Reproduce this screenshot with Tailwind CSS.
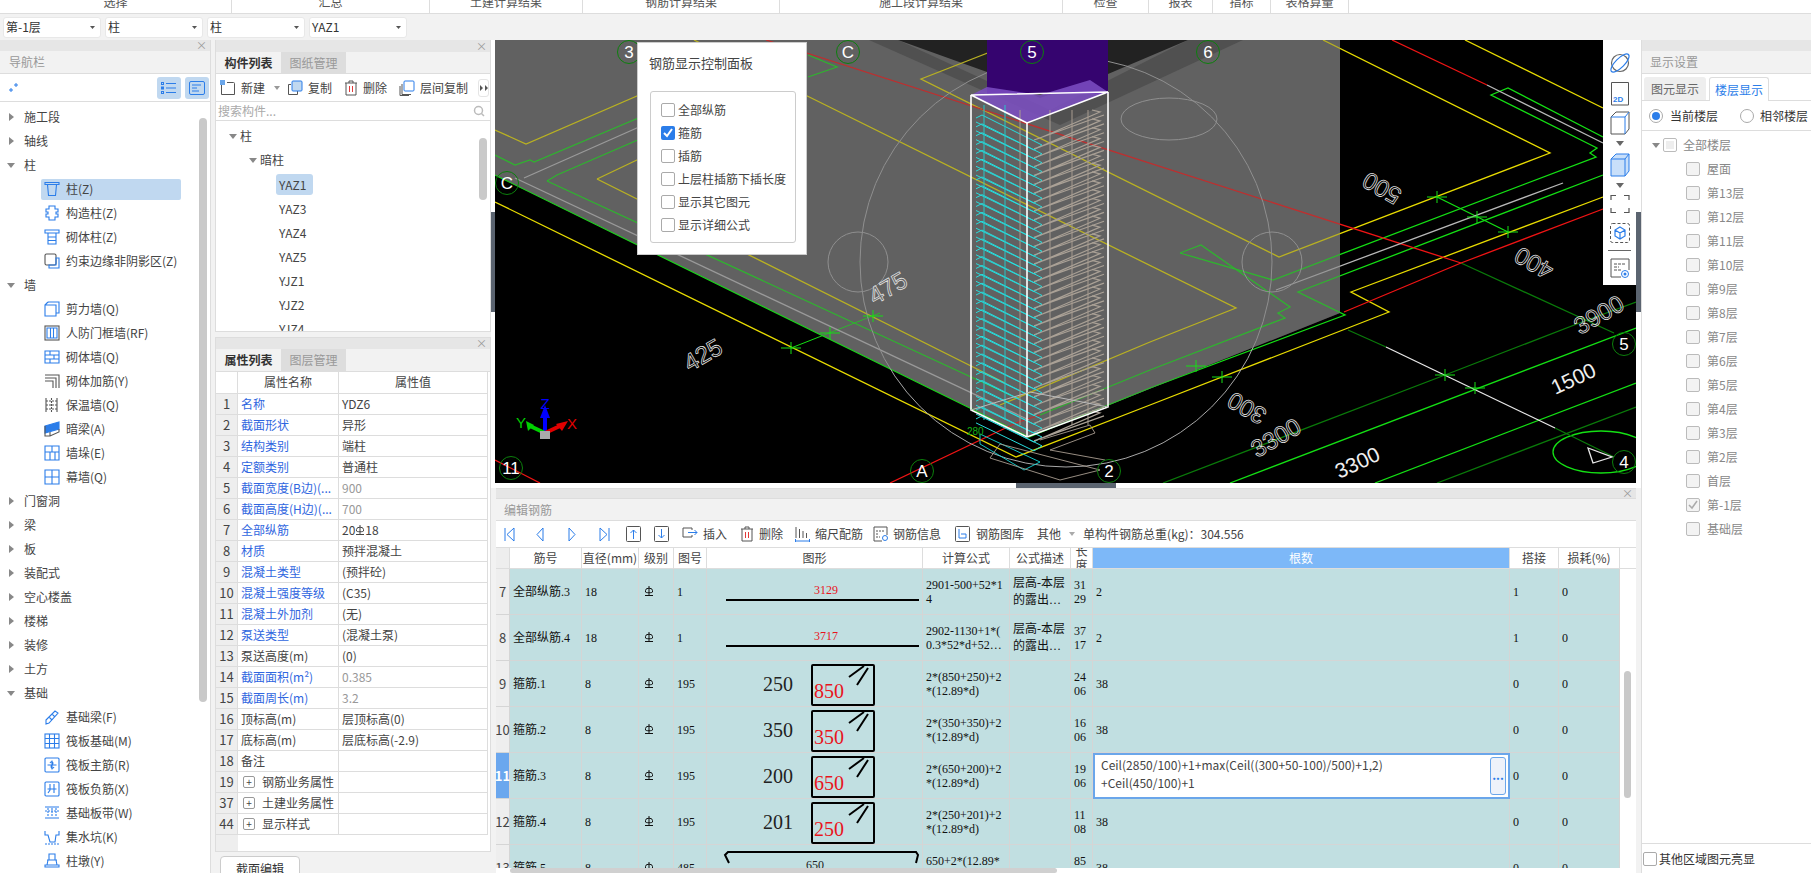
<!DOCTYPE html>
<html lang="zh-CN">
  <head>
    <meta charset="UTF-8" />
    <script src="https://cdn.jsdelivr.net/npm/@tailwindcss/browser@4"></script>
    <title>编辑钢筋</title>
  </head>
  <body class="w-[1811px] h-[873px] overflow-hidden bg-[#f2f2f2] text-[12px] text-[#444] font-['Noto_Sans_CJK_SC','Liberation_Sans',sans-serif]">
    <!-- top tabs, cut off by the window -->
    <div class="flex h-[14px] bg-white border-b border-[#ddd] overflow-hidden leading-none text-[#555]">
      <div class="w-[232px] text-center border-r border-[#ddd] -mt-[4px] h-[20px]">选择</div>
      <div class="w-[198px] text-center border-r border-[#ddd] -mt-[4px] h-[20px]">汇总</div>
      <div class="w-[153px] text-center border-r border-[#ddd] -mt-[4px] h-[20px]">土建计算结果</div>
      <div class="w-[197px] text-center border-r border-[#ddd] -mt-[4px] h-[20px]">钢筋计算结果</div>
      <div class="w-[283px] text-center border-r border-[#ddd] -mt-[4px] h-[20px]">施工段计算结果</div>
      <div class="w-[86px] text-center border-r border-[#ddd] -mt-[4px] h-[20px]">检查</div>
      <div class="w-[64px] text-center border-r border-[#ddd] -mt-[4px] h-[20px]">报表</div>
      <div class="w-[58px] text-center border-r border-[#ddd] -mt-[4px] h-[20px]">指标</div>
      <div class="w-[78px] text-center border-r border-[#ddd] -mt-[4px] h-[20px]">表格算量</div>
    </div>
    <!-- selectors -->
    <div id="selects" class="flex h-[26px] items-center pl-[3px] gap-[4px]"></div>

    <div class="flex h-[833px]">
      <!-- navigation -->
      <div class="w-[211px] shrink-0 bg-white border-r border-[#ddd] flex flex-col overflow-hidden relative">
        <div class="h-[11px] bg-[#e6e6e6] flex items-center justify-end pr-[2px] text-[#999] text-[11px]"><span class="mr-[1px]">×</span></div>
        <div class="h-[23px] bg-[#f2f2f2] border-b border-[#ddd] flex items-center pl-[9px] text-[#999] text-[12px]">导航栏</div>
        <div class="h-[28px] border-b border-[#ddd] flex items-center pl-[8px]">
          <svg width="11" height="11" viewBox="0 0 11 11" fill="none" stroke="#2b7de9"><path d="M3 6v4M1 8h4M8 1v4M6 3h4"/></svg>
          <div class="ml-auto mr-[1px] flex gap-[4px]">
            <div class="w-[24px] h-[22px] bg-[#c0d8f0] rounded-[3px] flex items-center justify-center"><svg width="16" height="14" fill="none" stroke="#2b7de9"><rect x=".5" y="1.5" width="2" height="2"/><rect x=".5" y="6" width="2" height="2"/><rect x=".5" y="10.5" width="2" height="2"/><path d="M5 2.500h10M5 7h10M5 11.500h10"/></svg></div>
            <div class="w-[24px] h-[22px] bg-[#c0d8f0] rounded-[3px] flex items-center justify-center"><svg width="16" height="14" fill="none" stroke="#2b7de9"><rect x=".5" y=".5" width="15" height="13" rx="1.500"/><path d="M3 4h9M3 7h5M3 10h7"/></svg></div>
          </div>
        </div>
        <div id="navTree" class="pt-[3px]"></div>
        <div class="absolute left-[199px] top-[78px] w-[8px] h-[584px] bg-[#c9c9c9] rounded-[4px]"></div>
      </div>

      <!-- component list + properties -->
      <div class="w-[276px] ml-[4px] shrink-0 flex flex-col">
        <div class="h-[292px] shrink-0 bg-white border border-t-0 border-[#ddd] flex flex-col overflow-hidden relative">
          <div class="h-[12px] shrink-0 bg-[#e6e6e6] flex items-center justify-end pr-[3px] text-[#999] text-[11px]">×</div>
          <div class="h-[22px] shrink-0 bg-[#f2f2f2] border-b border-[#ddd] flex">
            <div class="w-[65px] text-center font-bold text-[#333] leading-[22px]">构件列表</div>
            <div class="w-[65px] text-center bg-[#ddd] text-[#999] leading-[22px]">图纸管理</div>
          </div>
          <div class="h-[28px] shrink-0 border-b border-[#ddd] flex items-center pl-[4px] text-[#444] whitespace-nowrap">
            <svg class="shrink-0" width="16" height="16" fill="none" stroke="#555"><path d="M1.500 4v10.500h13v-11a1 1 0 0 0-1-1H7"/><rect x="0" y="0" width="5" height="5" fill="#6aa6ea" stroke="none"/></svg>
            <span class="ml-[5px]">新建</span>
            <svg class="ml-[9px] shrink-0" width="6" height="4"><path d="M0 0h6L3 4z" fill="#999"/></svg>
            <svg class="ml-[7px] shrink-0" width="16" height="16" fill="none" stroke="#555"><path d="M4 4.500H1.500v10h9V11"/><rect x="5" y="1" width="10" height="10" rx="1" fill="#c0d8f0" stroke="#2b7de9"/></svg>
            <span class="ml-[5px]">复制</span>
            <svg class="ml-[12px] shrink-0" width="14" height="16" fill="none" stroke="#555"><path d="M1 3h12M5 3V1h4v2M2 3v12h10V3"/><path d="M5.500 6v6M8.500 6v6" stroke="#e23a3a"/></svg>
            <span class="ml-[5px]">删除</span>
            <svg class="ml-[12px] shrink-0" width="16" height="16" fill="none" stroke="#555"><path d="M3 4v10.500h9M1 6v9.500h9"/><rect x="5" y="1" width="10" height="10" rx="1" stroke="#2b7de9"/></svg>
            <span class="ml-[5px]">层间复制</span>
            <div class="ml-[10px] w-[11px] h-[18px] shrink-0 border border-[#e5e5e5] rounded-[3px] flex items-center justify-center"><svg width="8" height="6"><path d="M0 0l3 3-3 3zM5 0l3 3-3 3z" fill="#555"/></svg></div>
          </div>
          <div class="h-[19px] shrink-0 border-b border-[#ddd] flex items-center pl-[2px] text-[#aaa] justify-between pr-[5px]">
            <span>搜索构件...</span>
            <svg width="12" height="12" fill="none" stroke="#bbb" stroke-width="1.500"><circle cx="5.500" cy="5.500" r="4"/><path d="M8.500 8.500L11 11"/></svg>
          </div>
          <div id="partTree" class="pt-[3px] text-[#444]"></div>
          <div class="absolute left-[263px] top-[98px] w-[8px] h-[62px] bg-[#c9c9c9] rounded-[4px]"></div>
        </div>
        <div class="h-[5px] shrink-0"></div>
        <div class="h-[515px] shrink-0 bg-white border border-t-0 border-[#ddd] flex flex-col">
          <div class="h-[12px] shrink-0 bg-[#e6e6e6] border-t border-[#ddd] flex items-center justify-end pr-[3px] text-[#999] text-[11px]">×</div>
          <div class="h-[23px] shrink-0 bg-[#f2f2f2] border-b border-[#ddd] flex">
            <div class="w-[65px] text-center font-bold text-[#333] leading-[22px]">属性列表</div>
            <div class="w-[65px] text-center bg-[#ddd] text-[#999] leading-[22px]">图层管理</div>
          </div>
          <div id="attrTable" class="flex-1 relative"></div>
        </div>
        <div class="mt-[4px] ml-[5px] w-[80px] h-[30px] shrink-0 border border-[#ccc] rounded-t-[4px] bg-white text-center leading-[24px] text-[#333]">截面编辑</div>
      </div>

      <!-- viewport + rebar table -->
      <div class="w-[1150px] shrink-0 flex flex-col">
        <div class="flex h-[443px] shrink-0">
          <div class="w-[4px] h-full relative bg-white"><div class="absolute top-[172px] left-0 w-[4px] h-[100px] bg-[#5b6470]"></div></div>
          <div class="relative w-[1141px] h-[443px] bg-black overflow-hidden">
            <svg id="cad" class="absolute inset-0" width="1141" height="443" viewBox="495 40 1141 443" fill="none" font-family="Liberation Sans, sans-serif">
              <polygon points="495,40 1340,40 1340,313 1029,437 495,175" fill="#616161"/>
              <polygon points="869,40 898,40 1050,110 1188,40 1243,40 1060,125" fill="#474747"/>
              <polygon points="898,40 1188,40 1108,74 1040,98 987,72" fill="#000"/>
              <g stroke-width="1.300">
                <g stroke="#e8dc00">
                  <polyline points="495,130 526,144 720,60"/>
                  <polyline points="694,40 1236,308 1150,342 1000,405"/>
                  <polyline points="1021,40 921,79 1279,257 1550,153 1323,40" />
                  <polyline points="597,179 700,130"/>
                  <polyline points="597,179 1005,383"/>
                  <polyline points="495,202 1016,457 1150,405 1348,328 1389,312 1351,292 1603,197"/>
                  <polyline points="1465,40 1603,108"/>
                </g>
                <g stroke="#14e014">
                  <polyline points="495,175 1029,437 1150,388 1345,315 1298,292 1603,175"/>
                  <polyline points="547,181 557,175 700,113"/>
                  <polyline points="547,181 1010,395"/>
                  <polyline points="495,155 515,165 530,160 534,162 700,92"/>
                  <polyline points="1180,253 1201,245 1290,307 1278,313 1285,318 1150,370 1040,415"/>
                  <polyline points="1180,253 1273,280 1596,157 1590,153 1597,148 1491,95 1508,88 1603,137"/>
                  <polyline points="808,55 837,67 808,77"/>
                  <polyline points="1230,483 1636,328"/>
                  <polyline points="1375,483 1636,383"/>
                  <polyline points="791,348 880,313" stroke-width="1"/>
                  <polyline points="1437,197 1508,232"/>
                  <ellipse cx="1601" cy="452" rx="48" ry="21"/>
                </g>
                <g stroke="#0a7a0a">
                  <polyline points="1163,483 1445,375 1582,322 1636,302"/>
                  <polyline points="1437,483 1636,407"/>
                  <polyline points="1461,263 1614,333"/>
                  <polyline points="1348,330 1386,347"/>
                  <polyline points="1555,428 1614,457"/>
                </g>
                <g stroke="#f01414">
                  <polyline points="1392,40 1487,85"/>
                  <polyline points="766,40 1461,263"/>
                  <polyline points="1344,312 1461,263 1603,209"/>
                  <polyline points="890,483 1016,423 1040,415"/>
                  <polyline points="495,460 540,483"/>
                </g>
                <g stroke="#b8b8b8">
                  <polyline points="524,178 700,100"/>
                  <polyline points="515,178 1029,420"/>
                  <polyline points="1276,290 1563,183"/>
                  <polyline points="1487,85 1603,143"/>
                </g>
                <g stroke="#a8a8a8" stroke-width="1">
                  <ellipse cx="1066" cy="262" rx="206" ry="205"/>
                  <ellipse cx="858" cy="262" rx="30" ry="30"/>
                  <ellipse cx="1272" cy="262" rx="30" ry="30"/>
                  <ellipse cx="1169" cy="119" rx="48" ry="21"/>
                  <circle cx="1065" cy="47" r="30"/>
                </g>
                <polyline points="1386,347 1555,428" stroke="#e8e8e8"/>
                <polygon points="1588,448 1593,463 1612,457" stroke="#e8e8e8"/>
              </g>
              <polygon points="495,40 1340,40 1340,313 1029,437 495,175" fill="#616161" fill-opacity=".35"/>
              <path id="ticks" stroke="#14e014"/>
              <rect x="987" y="40" width="121" height="54" fill="#35046f"/>
              <polygon points="971,95 987,87 1040,95 1090,80 1108,92 1027,123" fill="#7d4fc4" fill-opacity=".85"/>
              <g id="stirrups"></g>
              <g stroke="#fff" stroke-width="1.600">
                <polygon points="971,95 1027,123 1108,92"/>
                <polyline points="971,95 971,410 1027,437 1108,407 1108,92"/>
                <line x1="1027" y1="123" x2="1027" y2="437"/>
                <polyline points="971,410 1030,392 1108,407" stroke-width="1" stroke="#bbb"/>
              </g>
              <g stroke-width=".9">
                <polygon points="980,434 1040,462 1024,470 980,444" stroke="#14d8d8"/>
                <polygon points="1000,444 1100,470 1060,480 990,458" stroke="#a89c90"/>
                <polyline points="1040,440 1090,425 1095,433 1050,450 1105,460" stroke="#a89c90"/>
              </g>
              <text x="967" y="435" font-size="10" fill="#14b014">280</text>
              <g id="bubbles" font-size="17" text-anchor="middle" fill="#fff"></g>
              <g stroke="#dedede" stroke-width=".8" font-size="24" text-anchor="middle">
                <text transform="translate(707 362) rotate(-30)">425</text>
                <text transform="translate(892 295) rotate(-30)">475</text>
                <text transform="translate(1382 188) rotate(210)" dy="8">500</text>
                <text transform="translate(1534 263) rotate(210)" dy="8">400</text>
                <text transform="translate(1599 315) rotate(-30)" dy="8">3900</text>
                <text transform="translate(1276 438) rotate(-30)" dy="8">3300</text>
                <text transform="translate(1247 408) rotate(210)" dy="8">300</text>
              </g>
              <g fill="#efefef" font-size="21" text-anchor="middle">
                <text transform="translate(1573 378) rotate(-25)" dy="8">1500</text>
                <text transform="translate(1357 462) rotate(-25)" dy="8">3300</text>
              </g>
              <!-- axis triad -->
              <g>
                <line x1="545" y1="435" x2="545" y2="415" stroke="#0000ff" stroke-width="4"/>
                <polygon points="540,418 550,418 545,405" fill="#0000ff"/>
                <line x1="545" y1="433" x2="530" y2="426" stroke="#00d000" stroke-width="4"/>
                <polygon points="526,421 534,425 528,431" fill="#00d000"/>
                <line x1="545" y1="433" x2="560" y2="426" stroke="#e00000" stroke-width="4"/>
                <polygon points="556,424 568,421 562,431" fill="#e00000"/>
                <rect x="540" y="431" width="10" height="8" fill="#aaa"/>
                <text x="545" y="409" fill="#0000ff" font-size="15" text-anchor="middle">Z</text>
                <text x="521" y="428" fill="#00d000" font-size="15" text-anchor="middle">Y</text>
                <text x="572" y="429" fill="#e00000" font-size="15" text-anchor="middle">X</text>
              </g>
            </svg>

            <!-- rebar display panel -->
            <div class="absolute left-[142px] top-[2px] w-[170px] h-[213px] bg-white border border-[#ccc]">
              <div class="pl-[11px] pt-[11px] text-[13px] text-[#444] leading-[18px]">钢筋显示控制面板</div>
              <div id="rebarOpts" class="absolute left-[12px] top-[48px] w-[146px] h-[152px] border border-[#ccc] rounded-[3px] pt-[6px] pl-[10px]"></div>
            </div>

            <!-- view toolbar -->
            <div class="absolute right-0 top-0 w-[33px] h-[245px] bg-white flex flex-col items-center">
              <svg class="mt-[12px]" width="22" height="22" fill="none" stroke-width="1.200"><circle cx="11" cy="11" r="8.500" stroke="#666"/><ellipse cx="11" cy="11" rx="12" ry="4.500" transform="rotate(-45 11 11)" stroke="#2b7de9"/></svg>
              <svg class="mt-[8px]" width="20" height="24" fill="none" stroke="#555"><path d="M1.500 .5h17v22.500h-17z"/><text x="3" y="20" font-size="8" font-weight="700" fill="#2b7de9" stroke="none" font-family="Liberation Sans">2D</text></svg>
              <svg class="mt-[5px]" width="20" height="24" fill="none" stroke="#555"><path d="M1 6v17h14l4-5V1H6z"/><path d="M1 6h14v17M15 6l4-5" stroke="#2b7de9"/></svg>
              <svg class="mt-[6px]" width="8" height="5"><path d="M0 0h8L4 5z" fill="#666"/></svg>
              <svg class="mt-[7px]" width="20" height="24" stroke="#2b7de9"><path d="M1 6v17h14l4-5V1H6z" fill="#c8dffa"/><path d="M1 6h14v17M15 6l4-5" fill="none"/></svg>
              <svg class="mt-[6px]" width="8" height="5"><path d="M0 0h8L4 5z" fill="#666"/></svg>
              <svg class="mt-[6px]" width="20" height="20" fill="none" stroke="#555" stroke-width="1.200"><path d="M1 6V1.500h5M14 1.500h5V6M1 14v4.500h5M14 18.500h5V14"/></svg>
              <svg class="mt-[9px]" width="20" height="20" fill="none" stroke="#555"><rect x=".5" y=".5" width="19" height="19" rx="2" stroke-dasharray="3 2"/><path d="M10 4l5 3v6l-5 3-5-3V7zM5 7l5 3 5-3M10 10v6" stroke="#2b7de9" stroke-width="1.200"/></svg>
              <div class="w-[23px] h-px bg-[#666] mt-[7px]"></div>
              <svg class="mt-[7px]" width="20" height="20" fill="none" stroke="#555"><path d="M1 1h18v11M1 1v18h10"/><path d="M4 6h12M4 9h5M4 12h7" stroke-dasharray="3 1"/><circle cx="15" cy="16" r="3.500" stroke="#2b7de9"/><circle cx="15" cy="16" r="1.500" fill="#2b7de9" stroke="none"/></svg>
            </div>
          </div>
          <div class="w-[5px] h-full relative bg-white"><div class="absolute top-[172px] left-0 w-[5px] h-[100px] bg-[#5b6470]"></div></div>
        </div>
        <div class="h-[5px] shrink-0 bg-white relative"><div class="absolute left-[525px] w-[100px] h-[5px] bg-[#5b6470]"></div></div>
        <!-- rebar editor -->
        <div class="flex-1 ml-[5px] w-[1140px] bg-white overflow-hidden flex flex-col">
          <div class="h-[11px] bg-[#e6e6e6] border-y border-[#ddd] flex items-center justify-end pr-[3px] text-[#999] text-[11px] shrink-0">×</div>
          <div class="h-[22px] bg-[#f2f2f2] border-b border-[#ddd] flex items-center pl-[8px] text-[#999] shrink-0">编辑钢筋</div>
          <div class="h-[27px] border-b border-[#ddd] flex items-center pl-[8px] text-[#444] shrink-0 whitespace-nowrap">
            <svg width="11" height="15" fill="none" stroke="#2b7de9"><path d="M1 1v13M10 1L3 7.500l7 6.500z"/></svg>
            <svg class="ml-[21px]" width="8" height="15" fill="none" stroke="#2b7de9"><path d="M7 1L1 7.500 7 14z"/></svg>
            <svg class="ml-[24px]" width="8" height="15" fill="none" stroke="#2b7de9"><path d="M1 1l6 6.500L1 14z"/></svg>
            <svg class="ml-[23px]" width="11" height="15" fill="none" stroke="#2b7de9"><path d="M10 1v13M1 1l7 6.500L1 14z"/></svg>
            <svg class="ml-[16px]" width="15" height="16" fill="none" stroke="#555"><rect x=".5" y=".5" width="14" height="15" rx="1"/><path d="M7.500 13V4M4.500 7l3-3 3 3" stroke="#2b7de9"/></svg>
            <svg class="ml-[13px]" width="15" height="16" fill="none" stroke="#555"><rect x=".5" y=".5" width="14" height="15" rx="1"/><path d="M7.500 3v9M4.500 9l3 3 3-3" stroke="#2b7de9"/></svg>
            <svg class="ml-[13px]" width="16" height="14" fill="none" stroke="#555"><path d="M10 3V1H1v9h9V8"/><path d="M6 5.500h9M12.500 3l2.500 2.500L12.500 8" stroke="#2b7de9"/></svg>
            <span class="ml-[5px]">插入</span>
            <svg class="ml-[13px]" width="14" height="16" fill="none" stroke="#555"><path d="M1 3h12M5 3V1h4v2M2 3v12h10V3"/><path d="M5.500 6v6M8.500 6v6" stroke="#e23a3a"/></svg>
            <span class="ml-[5px]">删除</span>
            <svg class="ml-[12px]" width="15" height="16" fill="none" stroke="#555"><path d="M1 1v11M4.500 3v9M8 5v7M11.500 7v5"/><path d="M.5 15h14M.5 13v3M14.500 13v3" stroke="#2b7de9"/></svg>
            <span class="ml-[5px]">缩尺配筋</span>
            <svg class="ml-[10px]" width="15" height="16" fill="none" stroke="#555"><path d="M1 1h13v8M1 1v14h8"/><path d="M3 5h9M3 8h3M3 11h4" stroke-dasharray="2 1"/><circle cx="12" cy="12" r="2.500" stroke="#2b7de9"/></svg>
            <span class="ml-[5px]">钢筋信息</span>
            <svg class="ml-[14px]" width="15" height="16" fill="none" stroke="#555"><rect x=".5" y=".5" width="14" height="15" rx="1"/><path d="M4 3v9h7V8H6" stroke="#2b7de9"/></svg>
            <span class="ml-[6px]">钢筋图库</span>
            <span class="ml-[13px]">其他</span>
            <svg class="ml-[8px]" width="6" height="4"><path d="M0 0h6L3 4z" fill="#aaa"/></svg>
            <span class="ml-[8px]">单构件钢筋总重(kg)：304.556</span>
          </div>
          <div class="relative flex-1 overflow-hidden">
            <div id="rebarTable"></div>
            <div class="absolute left-[1128px] top-[123px] w-[7px] h-[127px] bg-[#c9c9c9] rounded-[4px]"></div>
            <div class="absolute left-0 bottom-0 w-full h-[5px] bg-white"><div class="ml-[14px] w-[547px] h-[5px] bg-[#d0d0d0] rounded-[3px]"></div></div>
          </div>
        </div>
      </div>

      <!-- display settings -->
      <div class="w-[170px] shrink-0 bg-white border-l border-[#ddd] flex flex-col relative">
        <div class="h-[11px] bg-[#e6e6e6] shrink-0"></div>
        <div class="h-[23px] bg-[#f2f2f2] border-b border-[#ddd] flex items-center pl-[8px] text-[#999] shrink-0">显示设置</div>
        <div class="h-[27px] border-b border-[#ddd] flex items-end pl-[2px] gap-[3px] shrink-0 -mb-px">
          <div class="w-[62px] h-[23px] bg-[#eee] rounded-t-[3px] text-center leading-[23px] text-[#666]">图元显示</div>
          <div class="w-[60px] h-[24px] bg-white border border-b-0 border-[#ddd] rounded-t-[3px] text-center leading-[23px] text-[#2b7de9] -mb-px">楼层显示</div>
        </div>
        <div class="h-[30px] border-b border-[#ddd] flex items-center pl-[7px] text-[#333] shrink-0 mt-px whitespace-nowrap overflow-hidden">
          <span class="w-[14px] h-[14px] rounded-full border border-[#aaa] flex items-center justify-center"><span class="w-[8px] h-[8px] rounded-full bg-[#2b7de9]"></span></span>
          <span class="ml-[7px]">当前楼层</span>
          <span class="ml-[22px] w-[14px] h-[14px] rounded-full border border-[#aaa]"></span>
          <span class="ml-[6px]">相邻楼层</span>
        </div>
        <div id="floorTree" class="pt-[2px] text-[#888]"></div>
        <div class="absolute left-0 bottom-0 w-full h-[30px] border-t border-[#ddd] flex items-center text-[#333] bg-white">
          <span class="ml-[1px] w-[14px] h-[14px] border border-[#aaa] rounded-[2px]"></span>
          <span class="ml-[2px]">其他区域图元亮显</span>
        </div>
      </div>
    </div>

    <script>
      const caret = (open) =>
        open
          ? `<svg width="8" height="5"><path d="M0 0h8L4 5z" fill="#888"/></svg>`
          : `<svg width="5" height="8"><path d="M0 0l5 4-5 4z" fill="#888"/></svg>`;

      document.getElementById("selects").innerHTML = ["第-1层", "柱", "柱", "YAZ1"]
        .map(
          (t) => `<div class="w-[98px] h-[21px] bg-white border border-[#e8e8e8] rounded-[3px] flex items-center justify-between pl-[2px] pr-[5px] text-[#333]">${t}<svg width="5" height="3"><path d="M0 0h5L2.500 3z" fill="#555"/></svg></div>`
        )
        .join("");

      const S = `fill="none" stroke="#2b7de9" stroke-width="1.100"`;
      const icons = {
        zhu: `<path d="M1 1.500h14v2H1zM3.500 3.500l1 11h7l1-11"/>`,
        gz: `<path d="M5 1h6v3h3v3h-2v2h2v3h-3v3H5v-3H2V9h2V7H2V4h3z"/>`,
        qt: `<path d="M1 1h14v3H1zM4 4v11h8V4M4 8h8M4 11.500h8"/>`,
        yb: `<rect x="1" y="1" width="11" height="11" rx="1.500" stroke="#555"/><path d="M12 5h3v10H5v-3h7z"/>`,
        jl: `<path d="M1 4h11v11H1zM4 1h11v11h-3M1 4l3-3"/>`,
        rf: `<rect x="1" y="1" width="14" height="14" stroke="#555"/><path d="M3 3h10v10H3zM6.500 3v10M9.500 3v10"/>`,
        qtq: `<path d="M1 2h14v12H1zM1 6h14M1 10h14M6 2v4M10 6v4M6 10v4"/>`,
        jj: `<path d="M1 2h14v13M1 5h11v10M1 8h8v7" stroke="#555"/>`,
        bw: `<path d="M2 1v14M13 1v14" stroke="#555"/><path d="M7.500 1v14M2 4h11M2 8h11M2 12h11" stroke-dasharray="2 1" stroke="#555"/>`,
        al: `<path d="M1 5l14-4v7L1 12z" fill="#2b7de9"/><path d="M1 5v10h5l9-4V8M6 11v4" stroke="#555"/>`,
        qd: `<path d="M1 1h14v14H1zM8 1v6M1 7h14M6 7v8M11 7v8"/>`,
        mq: `<path d="M1 1h14v14H1zM1 8h14M8 1v7M8 8v7"/>`,
        jcl: `<path d="M2 11L11 2l3 2-9 10-3 1zM5 8l3 3M8 5l3 3"/>`,
        fb: `<rect x="1" y="1" width="14" height="14"/><path d="M1 5.500h14M1 10.500h14M5.500 1v14M10.500 1v14"/>`,
        fz: `<rect x="1" y="1" width="14" height="14" rx="1"/><path d="M8 3.500v9M3.500 8h9M6 6c2-3 4 0 2 2M10 10c-2 3-4 0-2-2"/>`,
        ff: `<rect x="1" y="1" width="14" height="14" rx="1"/><path d="M6 3v6l-2 3M10 3v9M3.500 8h9"/>`,
        bd: `<path d="M1 2h14M1 13h14"/><path d="M4 3v9M8 3v9M12 3v9M1 6h14" stroke-dasharray="2 1"/>`,
        jsk: `<path d="M1 2v4h3l2 7h5l1-7h3V2"/><path d="M1 15h14" stroke-dasharray="2 1"/>`,
        zd: `<path d="M5 1h6v6H5zM3 7h10M1 12h14v2H1zM3 12l1-5M13 12l-1-5"/>`,
      };
      const icon = (k) => `<svg class="shrink-0" width="16" height="16" ${S}>${icons[k]}</svg>`;

      const nav = [
        ["施工段"], ["轴线"], ["柱", 1],
        ["柱(Z)", "zhu", true], ["构造柱(Z)", "gz"], ["砌体柱(Z)", "qt"], ["约束边缘非阴影区(Z)", "yb"],
        ["墙", 1],
        ["剪力墙(Q)", "jl"], ["人防门框墙(RF)", "rf"], ["砌体墙(Q)", "qtq"], ["砌体加筋(Y)", "jj"], ["保温墙(Q)", "bw"], ["暗梁(A)", "al"], ["墙垛(E)", "qd"], ["幕墙(Q)", "mq"],
        ["门窗洞"], ["梁"], ["板"], ["装配式"], ["空心楼盖"], ["楼梯"], ["装修"], ["土方"], ["基础", 1],
        ["基础梁(F)", "jcl"], ["筏板基础(M)", "fb"], ["筏板主筋(R)", "fz"], ["筏板负筋(X)", "ff"], ["基础板带(W)", "bd"], ["集水坑(K)", "jsk"], ["柱墩(Y)", "zd"],
      ];
      document.getElementById("navTree").innerHTML = nav
        .map(([t, k, sel]) => {
          if (typeof k === "string") {
            return `<div class="h-[24px] flex items-center pl-[41px]"><div class="h-[21px] ${sel ? "w-[140px] bg-[#c0d8f0] rounded-[2px]" : ""} flex items-center pl-[3px] gap-[6px] text-[#444]">${icon(k)}<span>${t}</span></div></div>`;
          }
          return `<div class="h-[24px] flex items-center text-[#444]"><span class="w-[24px] flex justify-center pr-[2px]">${caret(k)}</span>${t}</div>`;
        })
        .join("");

      const parts = ["YAZ1", "YAZ3", "YAZ4", "YAZ5", "YJZ1", "YJZ2", "YJZ4"];
      document.getElementById("partTree").innerHTML =
        `<div class="h-[24px] flex items-center pl-[13px] gap-[2px]">${caret(1)}<span class="ml-[1px]">柱</span></div>
         <div class="h-[24px] flex items-center pl-[33px] gap-[3px]">${caret(1)}暗柱</div>` +
        parts
          .map(
            (p, i) => `<div class="h-[24px] flex items-center pl-[60px]"><span class="h-[21px] w-[37px] leading-[21px] pl-[3px] rounded-[3px] ${i === 0 ? "bg-[#c0d8f0]" : ""}">${p}</span></div>`
          )
          .join("");

      const rebarMark = `<svg class="inline-block align-[-1px]" width="10" height="11" fill="none" stroke="currentColor"><path d="M5 0v10M1 9.500h8M1.500 6V4.500a3 2 0 0 1 7 0V6c0 1-7 1-7 0z"/></svg>`;
      const attrs = [
        [1, "名称", "YDZ6", "b"], [2, "截面形状", "异形", "b"], [3, "结构类别", "端柱", "b"], [4, "定额类别", "普通柱", "b"],
        [5, "截面宽度(B边)(...", "900", "bg"], [6, "截面高度(H边)(...", "700", "bg"], [7, "全部纵筋", `20${rebarMark}18`, "b"],
        [8, "材质", "预拌混凝土", "b"], [9, "混凝土类型", "(预拌砼)", "b"], [10, "混凝土强度等级", "(C35)", "b"],
        [11, "混凝土外加剂", "(无)", "b"], [12, "泵送类型", "(混凝土泵)", "b"], [13, "泵送高度(m)", "(0)", ""],
        [14, "截面面积(m²)", "0.385", "bg"], [15, "截面周长(m)", "3.2", "bg"], [16, "顶标高(m)", "层顶标高(0)", ""],
        [17, "底标高(m)", "层底标高(-2.9)", ""], [18, "备注", "", ""], [19, "钢筋业务属性", "", "p"], [37, "土建业务属性", "", "p"], [44, "显示样式", "", "p"],
      ];
      const plus = `<span class="w-[12px] h-[12px] border border-[#999] rounded-[2px] flex items-center justify-center text-[10px] leading-none mr-[7px] ml-[2px]">+</span>`;
      document.getElementById("attrTable").innerHTML =
        `<div class="absolute left-0 top-0 bottom-0 w-[22px] bg-[#eee]"></div>
         <div class="relative flex h-[22px] border-b border-[#ddd] bg-white w-[272px]"><div class="w-[22px] border-r border-[#ddd] bg-white"></div><div class="w-[101px] border-r border-[#ddd] text-center leading-[20px]">属性名称</div><div class="flex-1 border-r border-[#ddd] text-center leading-[20px]">属性值</div></div>` +
        attrs
          .map(
            ([n, k, v, f]) => `<div class="relative flex h-[21px] w-[272px] border-b border-[#ddd] leading-[20px]">
              <div class="w-[22px] border-r border-[#ddd] bg-[#eee] text-center text-[13px] text-[#444]">${n}</div>
              <div class="w-[101px] border-r border-[#ddd] pl-[3px] whitespace-nowrap overflow-hidden flex items-center ${f[0] === "b" ? "text-[#2f66e0]" : "text-[#444]"}">${f === "p" ? plus : ""}${k}</div>
              <div class="flex-1 border-r border-[#ddd] pl-[3px] bg-white ${f === "bg" ? "text-[#999]" : "text-[#444]"}">${v}</div>
            </div>`
          )
          .join("");

      document.getElementById("rebarOpts").innerHTML = [
        ["全部纵筋"], ["箍筋", 1], ["插筋"], ["上层柱插筋下插长度"], ["显示其它图元"], ["显示详细公式"],
      ]
        .map(
          ([t, on]) => `<div class="h-[23px] flex items-center gap-[3px] whitespace-nowrap">${
            on
              ? `<span class="w-[14px] h-[14px] rounded-[2px] bg-[#2b7de9] flex items-center justify-center"><svg width="10" height="10" fill="none" stroke="#fff" stroke-width="2"><path d="M1 5l3 3 5-7"/></svg></span>`
              : `<span class="w-[14px] h-[14px] rounded-[2px] border border-[#aaa] bg-white"></span>`
          }${t}</div>`
        )
        .join("");

      const floors = ["屋面", "第13层", "第12层", "第11层", "第10层", "第9层", "第8层", "第7层", "第6层", "第5层", "第4层", "第3层", "第2层", "首层", "第-1层", "基础层"];
      const box = (on) =>
        `<span class="w-[14px] h-[14px] rounded-[2px] border border-[#bbb] bg-[#f3f3f3] flex items-center justify-center">${on ? `<svg width="10" height="10" fill="none" stroke="#aaa" stroke-width="1.500"><path d="M1 5l3 3 5-7"/></svg>` : ""}</span>`;
      document.getElementById("floorTree").innerHTML =
        `<div class="h-[24px] flex items-center pl-[10px]">${caret(1)}<span class="ml-[3px] w-[14px] h-[14px] border border-[#bbb] rounded-[2px] p-[2px]"><span class="block w-full h-full bg-[#eee]"></span></span><span class="ml-[6px]">全部楼层</span></div>` +
        floors
          .map((f) => `<div class="h-[24px] flex items-center pl-[44px] gap-[7px]">${box(f === "第-1层")}${f}</div>`)
          .join("");

      // 图形 cell drawings
      const line = (n) => `<svg width="216" height="46"><text x="119" y="25" text-anchor="middle" fill="#e8141c" font-size="12" font-family="Liberation Serif">${n}</text><rect x="19" y="30" width="193" height="2" fill="#000"/></svg>`;
      const stirrup = (a, b) => `<svg width="216" height="46" fill="none"><text x="71" y="30" text-anchor="middle" fill="#222" font-size="20" font-family="Liberation Serif">${a}</text><rect x="105" y="4" width="62" height="40" rx="1" stroke="#000" stroke-width="2"/><path d="M142 16l15-11M150 24l11-17" stroke="#000" stroke-width="2"/><text x="107" y="37" fill="#e8141c" font-size="20" font-family="Liberation Serif">${b}</text></svg>`;
      const hook = `<svg width="216" height="46" fill="none"><path d="M22 18l-4-8 3-3h188l2 3-2 8" stroke="#000" stroke-width="2"/><text x="108" y="24" text-anchor="middle" fill="#222" font-size="12" font-family="Liberation Serif">650</text></svg>`;

      const rows = [
        [7, "全部纵筋.3", "18", "1", line(3129), "2901-500+52*1<br>4", "层高-本层<br>的露出…", "31<br>29", "2", "1"],
        [8, "全部纵筋.4", "18", "1", line(3717), "2902-1130+1*(<br>0.3*52*d+52…", "层高-本层<br>的露出…", "37<br>17", "2", "1"],
        [9, "箍筋.1", "8", "195", stirrup(250, 850), "2*(850+250)+2<br>*(12.89*d)", "", "24<br>06", "38", "0"],
        [10, "箍筋.2", "8", "195", stirrup(350, 350), "2*(350+350)+2<br>*(12.89*d)", "", "16<br>06", "38", "0"],
        [11, "箍筋.3", "8", "195", stirrup(200, 650), "2*(650+200)+2<br>*(12.89*d)", "", "19<br>06", "", "0"],
        [12, "箍筋.4", "8", "195", stirrup(201, 250), "2*(250+201)+2<br>*(12.89*d)", "", "11<br>08", "38", "0"],
        [13, "箍筋.5", "8", "485", hook, "650+2*(12.89*<br>d)", "", "85<br>8", "38", "0"],
      ];
      const headCell = "border-r border-[#ddd] text-center leading-[19px] text-[#444] shrink-0";
      const cell = "shrink-0 border-r border-b border-[#d5d5d5] flex items-center pl-[3px] leading-[14px] font-['Liberation_Serif','Noto_Sans_CJK_SC',serif] text-[#111]";
      const editor = `<div class="w-[417px] h-[46px] shrink-0 border-2 border-[#6aa6ea] bg-white relative pl-[6px] pt-[1px] leading-[18px] text-[#444] whitespace-nowrap font-['Noto_Sans_CJK_SC','Liberation_Sans',sans-serif]">Ceil(2850/100)+1+max(Ceil((300+50-100)/500)+1,2)<br>+Ceil(450/100)+1<div class="absolute right-[2px] top-[2px] w-[16px] h-[38px] border border-[#6aa6ea] rounded-[3px] bg-[#eef2fa] text-[#2b7de9] text-center font-bold leading-[34px]">...</div></div>`;
      document.getElementById("rebarTable").innerHTML =
        `<div class="flex h-[21px] border-b border-[#ddd] overflow-hidden">
          <div class="w-[14px] bg-[#eee] ${headCell}"></div>
          <div class="w-[72px] ${headCell}">筋号</div><div class="w-[57px] ${headCell}">直径(mm)</div><div class="w-[35px] ${headCell}">级别</div><div class="w-[33px] ${headCell}">图号</div><div class="w-[216px] ${headCell}">图形</div><div class="w-[87px] ${headCell}">计算公式</div><div class="w-[61px] ${headCell}">公式描述</div>
          <div class="w-[22px] border-r border-[#ddd] text-center text-[#444] shrink-0 leading-[14px] -mt-[4px]">长<br>度</div>
          <div class="w-[417px] shrink-0 bg-[#7db8f8] text-white text-center leading-[20px] border-r border-[#ddd]">根数</div>
          <div class="w-[49px] ${headCell}">搭接</div><div class="w-[61px] ${headCell}">损耗(%)</div>
        </div>` +
        rows
          .map(
            ([n, name, d, tu, shape, calc, desc, len, cnt, lap], i) => `<div class="flex h-[46px] w-[1124px] bg-[#c1dfe1]">
              <div class="w-[14px] shrink-0 border-r border-b border-[#d5d5d5] flex items-center justify-center text-[13px] whitespace-nowrap ${n === 11 ? "bg-[#6ba7ee] text-white font-bold" : "bg-[#eee] text-[#444]"}">${n}</div>
              <div class="w-[72px] ${cell}">${name}</div>
              <div class="w-[57px] ${cell}">${d}</div>
              <div class="w-[35px] ${cell} pl-[5px]">${rebarMark}</div>
              <div class="w-[33px] ${cell}">${tu}</div>
              <div class="w-[216px] shrink-0 border-r border-b border-[#d5d5d5]">${shape}</div>
              <div class="w-[87px] ${cell} whitespace-nowrap">${calc}</div>
              <div class="w-[61px] ${cell} leading-[17px] text-[12px] whitespace-nowrap">${desc}</div>
              <div class="w-[22px] ${cell}">${len}</div>
              ${n === 11 ? editor : `<div class="w-[417px] ${cell}">${cnt}</div>`}
              <div class="w-[49px] ${cell}">${lap}</div>
              <div class="w-[61px] ${cell}">0</div>
            </div>`
          )
          .join("");

      // stirrups and vertical bars inside the column
      const NS = "http://www.w3.org/2000/svg";
      const st = document.getElementById("stirrups");
      const add = (tag, attrs) => {
        const el = document.createElementNS(NS, tag);
        for (const k in attrs) el.setAttribute(k, attrs[k]);
        st.appendChild(el);
      };
      for (let i = 0; i < 35; i++) {
        const y = 118 + i * 8.85;
        add("polyline", { points: `1092,${y - 8} 1100,${y - 6} 1040,${y + 20} 1034,${y + 22} 1104,${y - 3}`, stroke: "#aaa196", "stroke-width": 1.2 });
        add("polyline", { points: `976,${y} 982,${y - 3} 1042,${y + 27} 1034,${y + 32} 976,${y + 4}`, stroke: "#27dcdc", "stroke-width": 1 });
      }
      [984, 1005].forEach((x) => add("line", { x1: x, y1: 105, x2: x, y2: 420, stroke: "#27c8c8" }));
      [1020, 1050, 1072, 1088].forEach((x) => add("line", { x1: x, y1: 110, x2: x, y2: 425, stroke: "#a89c90" }));

      // dimension ticks on the axis lines
      document.getElementById("ticks").setAttribute(
        "d",
        [[791, 348], [830, 333], [873, 316], [1437, 197], [1477, 217], [1508, 232], [1445, 375], [1475, 388], [1222, 377], [1196, 366]]
          .map(([x, y]) => `M${x - 10} ${y}h20M${x} ${y - 6}v12`)
          .join("")
      );

      // grid bubbles
      const bub = document.getElementById("bubbles");
      [["3", 629, 52], ["C", 848, 52], ["5", 1032, 52], ["6", 1208, 52], ["C", 507, 183], ["11", 511, 468], ["A", 922, 471], ["2", 1109, 471], ["5", 1624, 344], ["4", 1624, 462]].forEach(([t, x, y]) => {
        const c = document.createElementNS(NS, "circle");
        c.setAttribute("cx", x); c.setAttribute("cy", y); c.setAttribute("r", 11.500);
        c.setAttribute("fill", "none"); c.setAttribute("stroke", "#0c800c");
        const tx = document.createElementNS(NS, "text");
        tx.setAttribute("x", x); tx.setAttribute("y", y + 6); tx.textContent = t;
        bub.append(c, tx);
      });
    </script>
  </body>
</html>
